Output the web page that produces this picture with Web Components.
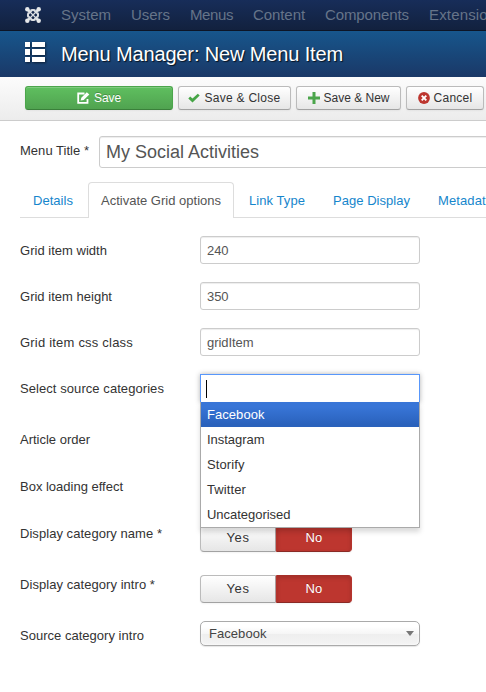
<!DOCTYPE html>
<html lang="en">
<head>
<meta charset="utf-8">
<title>Menu Manager: New Menu Item</title>
<style>
html,body{margin:0;padding:0;background:#fff}
body{width:486px;height:692px;overflow:hidden;font:13px/18px "Liberation Sans",Arial,sans-serif;color:#333}
</style>
</head>
<body>
<admin-page></admin-page>
<script>
const define = (name, html, setup) => {
  const tpl = document.createElement('template');
  tpl.innerHTML = html;
  customElements.define(name, class extends HTMLElement {
    connectedCallback() {
      if (this.shadowRoot) return;
      this.attachShadow({mode: 'open'}).append(tpl.content.cloneNode(true));
      if (setup) setup.call(this, this.shadowRoot);
    }
  });
};

/* Text tracked to a given advance width. */
define('fit-text', `<style>:host{display:inline-block;white-space:pre}</style><slot></slot>`, function () {
  const w = +this.getAttribute('w');
  const n = this.textContent.length;
  const natural = this.getBoundingClientRect().width;
  if (w && natural) this.style.letterSpacing = ((w - natural) / n).toFixed(3) + 'px';
});

define('nav-bar', `<style>
:host{display:flex;height:30px;box-sizing:content-box;border-bottom:1px solid #0d1526;background:linear-gradient(#172d59,#12213e);color:#667489;font-size:15px;line-height:30px;padding-left:25px;overflow:hidden;white-space:nowrap}
svg{flex:none;width:16px;height:16px;margin:7px 20px 0 0}
nav{display:flex;flex:none}
fit-text{flex:none;margin-right:20px}
</style>
<svg viewBox="0 0 16 16" fill="none" stroke="#dcdfe3" stroke-linejoin="round">
<path d="M2.4 2.4L5 5M13.6 2.4L11 5M13.6 13.6L11 11M2.4 13.6L5 11" stroke-width="2.6"/>
<path d="M3.6 10.6C2.4 9.3 2.6 7.8 3.6 6.8L6.8 3.6C8.2 2.4 9.3 2.6 10.6 3.6M12.4 5.4C13.6 6.7 13.4 8.2 12.4 9.2L9.2 12.4C7.8 13.6 6.7 13.4 5.4 12.4" stroke-width="1.5"/>
<path d="M5.4 3.6C6.7 2.4 8.2 2.6 9.2 3.6L12.4 6.8C13.6 8.2 13.4 9.3 12.4 10.6M10.6 12.4C9.3 13.6 7.8 13.4 6.8 12.4L3.6 9.2C2.4 7.8 2.6 6.7 3.6 5.4" stroke-width="1.5"/>
<path d="M5 5l6 6M11 5l-6 6" stroke-width="1.3"/>
<g fill="#e6e8ea" stroke="none"><circle cx="2.3" cy="2.3" r="2.2"/><circle cx="13.7" cy="2.3" r="2.2"/><circle cx="2.3" cy="13.7" r="2.2"/><circle cx="13.7" cy="13.7" r="2.2"/></g></svg>
<nav><fit-text w="50">System</fit-text><fit-text w="39">Users</fit-text><fit-text w="43">Menus</fit-text><fit-text w="52">Content</fit-text><fit-text w="84">Components</fit-text><fit-text w="75">Extensions</fit-text></nav>`);

define('page-header', `<style>
:host{display:flex;height:46px;background:linear-gradient(#17568c,#1a3867);color:#fff;font-size:20px;line-height:46px;padding-left:25px;white-space:nowrap}
svg{width:21px;height:21px;margin:11px 15px 0 0;filter:drop-shadow(1px 1px 1px #0008)}
fit-text{text-shadow:1px 1px 1px #000b}
</style>
<svg viewBox="0 0 21 21" fill="#fff"><path d="M0 0h5v5H0zM7 0h13v5H7zM0 7h5v6H0zM7 7h13v6H7zM0 15h5v5H0zM7 15h13v5H7z"/></svg>
<fit-text w="282">Menu Manager: New Menu Item</fit-text>`);

define('tool-button', `<style>
:host{display:flex;flex:none;box-sizing:border-box;height:24px;border:1px solid #bbb;border-bottom-color:#a2a2a2;border-radius:3px;background:linear-gradient(#fff,#e6e6e6);align-items:center;justify-content:center;font-size:12px;line-height:22px;box-shadow:inset 0 1px 0 #fff3,0 1px 2px #0000000d;white-space:nowrap}
:host([primary]){background:linear-gradient(#5fbf5f,#50a350);border-color:#4ba54b #4ba54b #3a803a;color:#fff;text-shadow:0 -1px 0 #00000040}
slot[name=icon]::slotted(svg){display:block;flex:none}
</style><slot name="icon"></slot><slot></slot>`);

define('action-bar', `<style>
:host{display:flex;gap:5px;height:43px;box-sizing:content-box;padding:0 0 0 25px;background:linear-gradient(#fcfcfc,#ececec);border-bottom:1px solid #ccc;overflow:hidden}
tool-button{margin-top:9px}
.a{width:148px}.b{width:113px}.c{width:105px}.d{width:78px}
svg{margin-right:4px}
</style>
<tool-button primary class="a"><svg slot="icon" width="13" height="12" viewBox="0 0 13 12"><path d="M7.5 1.5H1.2v9.3h9.3V7" fill="none" stroke="#fff" stroke-width="1.8"/><path d="M3.6 8.6L4.3 5.7 9.8.3 12.3 2.6 6.7 8z" fill="#fff"/></svg><fit-text w="27">Save</fit-text></tool-button>
<tool-button class="b"><svg slot="icon" width="12" height="11" viewBox="0 0 12 11"><path d="M.3 5.4L2.2 3.4 4.5 5.6 9.8.7 11.7 2.5 4.5 9.6z" fill="#46a546"/></svg><fit-text w="76">Save &amp; Close</fit-text></tool-button>
<tool-button class="c"><svg slot="icon" width="12" height="12" viewBox="0 0 12 12"><path d="M4.5 0h3v4.5H12v3H7.5V12h-3V7.5H0v-3h4.5z" fill="#4ba54b"/></svg><fit-text w="66">Save &amp; New</fit-text></tool-button>
<tool-button class="d"><svg slot="icon" width="12" height="12" viewBox="0 0 12 12"><circle cx="6" cy="6" r="5.9" fill="#bd362f"/><path d="M3.7 3.7l4.6 4.6M8.3 3.7L3.7 8.3" stroke="#fff" stroke-width="1.9"/></svg><fit-text w="39">Cancel</fit-text></tool-button>`);

define('text-field', `<style>
:host{display:block;box-sizing:border-box;width:220px;height:28px;border:1px solid #ccc;border-radius:3px;background:#fff;box-shadow:inset 0 1px 1px #00000013;color:#555;padding:0 6px;line-height:27px}
:host([large]){width:420px;flex:none;height:32px;font-size:18px;line-height:30px}
</style><slot></slot>`);

define('title-row', `<style>
:host{display:flex;padding:15px 0 0 20px;overflow:hidden;height:47px;box-sizing:border-box}
.l{width:79px;flex:none;padding-top:6px}
</style><div class="l"><fit-text w="69">Menu Title *</fit-text></div><text-field large><fit-text w="153">My Social Activities</fit-text></text-field>`);

define('tab-item', `<style>
:host{display:block;flex:none;box-sizing:border-box;height:35px;border:1px solid transparent;padding:0 12px;line-height:36px;color:#1686cc;margin-right:2px}
:host([active]){height:36px;border-color:#ddd;border-bottom:0;border-radius:4px 4px 0 0;background:#fff;color:#555;margin-bottom:-1px}
</style><slot></slot>`);

define('tab-list', `<style>
:host{display:flex;margin:14px 0 18px 20px;border-bottom:1px solid #ddd;height:35px;white-space:nowrap}
</style>
<tab-item><fit-text w="40">Details</fit-text></tab-item><tab-item active><fit-text w="120">Activate Grid options</fit-text></tab-item><tab-item><fit-text w="56">Link Type</fit-text></tab-item><tab-item><fit-text w="77">Page Display</fit-text></tab-item><tab-item><fit-text w="55">Metadata</fit-text></tab-item>`);

define('form-row', `<style>
:host{display:flex;padding-left:20px}
.label{width:180px;flex:none;padding-top:6px}
</style><div class="label"><slot name="label"></slot></div><slot></slot>`);

define('yes-no', `<style>
:host{display:flex;margin-top:5px;width:152px;height:28px}
span{display:flex;box-sizing:border-box;align-items:center;justify-content:center;flex:1;border:1px solid #bbb;border-bottom-color:#a2a2a2;line-height:26px}
.y{border-radius:4px 0 0 4px;background:linear-gradient(#fff,#e6e6e6);box-shadow:0 1px 2px #0000000d}
.n{border-radius:0 4px 4px 0;background:#bd362f;color:#fff;border-color:#a52f29 #b5342d #8a2a25;box-shadow:inset 0 2px 4px #00000026,0 1px 2px #0000000d;text-shadow:0 -1px 0 #00000040}
.y{border-right-color:#b0a0a0}
</style><span class="y"><fit-text w="23">Yes</fit-text></span><span class="n"><fit-text w="17">No</fit-text></span>`);

define('select-box', `<style>
:host{display:flex;box-sizing:border-box;width:220px;height:25px;border:1px solid #aaa;border-radius:5px;background:linear-gradient(#fff 20%,#f6f6f6 50%,#eee 52%,#f4f4f4);box-shadow:0 0 3px #fff inset,0 1px 1px #0000001a;color:#444;padding:0 5px 0 8px;line-height:25px;justify-content:space-between;align-items:center}
i{width:0;height:0;border:4px solid transparent;border-top:5px solid #777;border-bottom:0}
</style><slot></slot><i></i>`);

define('category-chooser', `<style>
:host{display:block;position:relative;width:220px;height:29px}
.field{box-sizing:border-box;height:29px;border:1px solid #5897fb;background:#fff;box-shadow:0 0 5px #0000004d;padding:5px 0 0 5px}
.caret{width:1px;height:18px;background:#000}
.menu{position:absolute;z-index:2;left:0;top:28px;width:220px;height:126px;box-sizing:border-box;border:1px solid #aaa;border-top:0;background:#fff;box-shadow:0 4px 5px #00000026}
.menu div{height:25px;line-height:25px;padding-left:6px}
.menu .on{color:#fff;background:linear-gradient(#3875d7 20%,#2a62bc 90%)}
</style>
<div class="field"><div class="caret"></div></div>
<div class="menu"><div class="on"><fit-text w="57.5">Facebook</fit-text></div><div><fit-text w="57.5">Instagram</fit-text></div><div><fit-text w="37.5">Storify</fit-text></div><div><fit-text w="39">Twitter</fit-text></div><div><fit-text w="83.5">Uncategorised</fit-text></div></div>`);

define('options-form', `<style>
:host{display:grid;grid-template-rows:46px 46px 46px 51px 47px 47px 51px 51px 47px}
</style>
<form-row><fit-text slot="label" w="87">Grid item width</fit-text><text-field><fit-text w="21.5">240</fit-text></text-field></form-row>
<form-row><fit-text slot="label" w="92">Grid item height</fit-text><text-field><fit-text w="21.5">350</fit-text></text-field></form-row>
<form-row><fit-text slot="label" w="113">Grid item css class</fit-text><text-field><fit-text w="46.5">gridItem</fit-text></text-field></form-row>
<form-row><fit-text slot="label" w="144">Select source categories</fit-text><category-chooser></category-chooser></form-row>
<form-row><fit-text slot="label" w="70">Article order</fit-text></form-row>
<form-row><fit-text slot="label" w="103">Box loading effect</fit-text></form-row>
<form-row><fit-text slot="label" w="142">Display category name *</fit-text><yes-no></yes-no></form-row>
<form-row><fit-text slot="label" w="135">Display category intro *</fit-text><yes-no></yes-no></form-row>
<form-row><fit-text slot="label" w="124">Source category intro</fit-text><select-box><fit-text w="57.5">Facebook</fit-text></select-box></form-row>`);

define('admin-page', `<style>:host{display:block;width:486px;height:692px;overflow:hidden;background:#fff}</style>
<nav-bar></nav-bar><page-header></page-header><action-bar></action-bar><title-row></title-row><tab-list></tab-list><options-form></options-form>`);
</script>
</body>
</html>
